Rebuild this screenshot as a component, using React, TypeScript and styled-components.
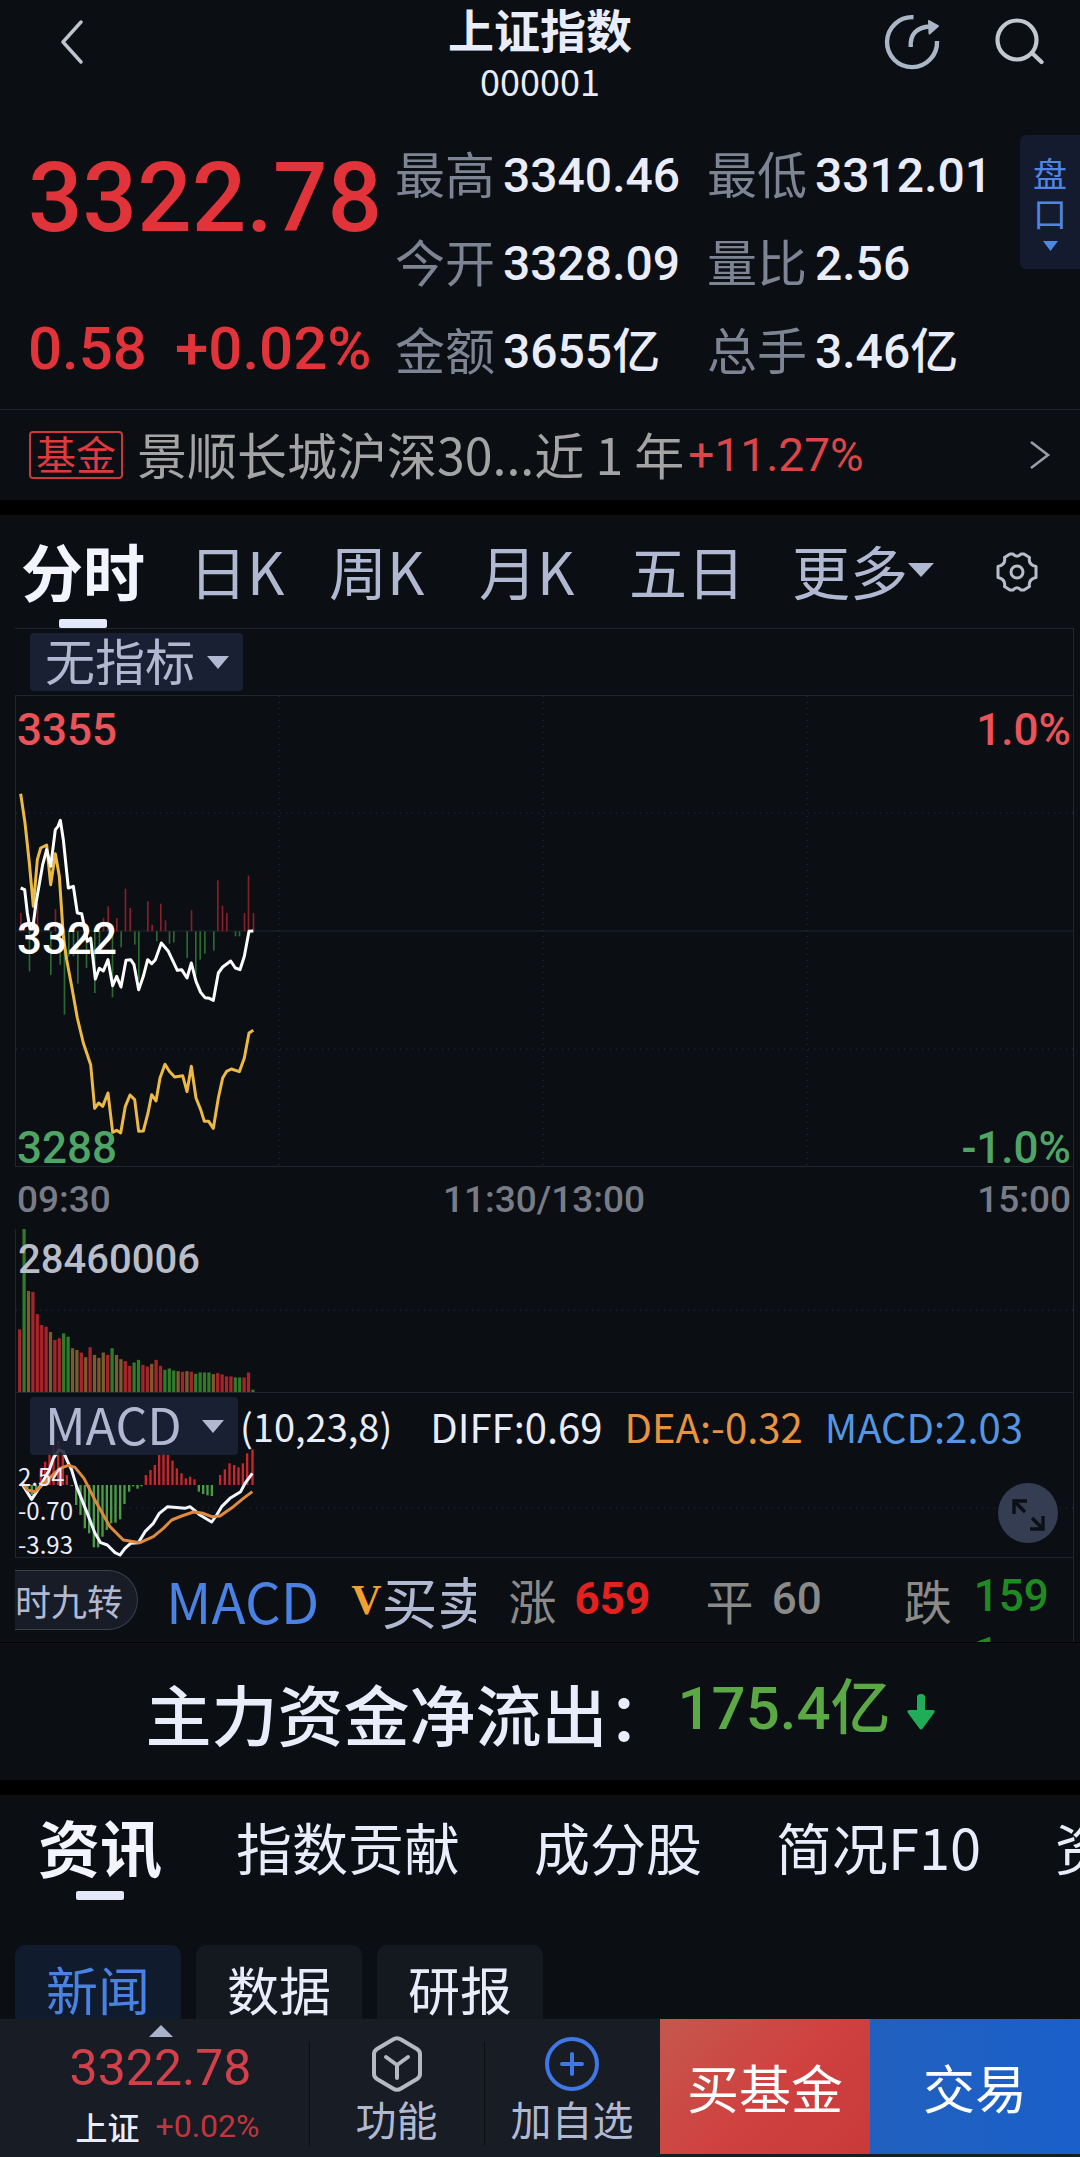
import React from 'react';
import styled, { createGlobalStyle, css } from 'styled-components';

const hans = '"Noto Sans CJK SC", sans-serif';
const digits = 'Roboto, "Noto Sans CJK SC", sans-serif';

const color = {
  bg: '#0b0e13',
  line: '#20252e',
  text: '#e9edfb',
  soft: '#b0b9d1',
  label: '#7d8595',
  axis: '#777c87',
  grey: '#8a8a89',
  red: '#e0333a',
  up: '#ea5358',
  down: '#4fa565',
  blue: '#4a82e4',
  orange: '#e8933f',
};

const Global = createGlobalStyle`
  * { box-sizing: border-box; }
  body { margin: 0; background: ${color.bg}; }
  button, select { font: inherit; color: inherit; background: none; border: 0; padding: 0; margin: 0; cursor: pointer; }
  a { color: inherit; text-decoration: none; }
  dl, dd, dt, h1, p { margin: 0; }
  svg { display: block; }
`;

const Screen = styled.div`
  display: flex;
  flex-direction: column;
  height: 100vh;
  overflow: hidden;
  background: ${color.bg};
  color: ${color.text};
  font-family: ${hans};
  white-space: nowrap;
`;

const Content = styled.main`
  flex: 1;
  min-height: 0;
  overflow: hidden auto;
  scrollbar-width: none;
`;

/* ---------- header ---------- */

const Header = styled.header`
  display: grid;
  grid-template-columns: 1fr auto 1fr;
  padding: 0 36px;
`;

const HeaderSide = styled.div<{ $end?: boolean }>`
  display: flex;
  height: 84px;
  align-items: center;
  gap: 54px;
  padding-left: 24px;
  justify-content: ${(p) => (p.$end ? 'flex-end' : 'flex-start')};
`;

const Title = styled.h1`
  font-size: 46px;
  line-height: 56px;
  font-weight: 700;
  text-align: center;
`;

const Code = styled.p`
  font-size: 36px;
  line-height: 48px;
  font-weight: 400;
  text-align: center;
`;

/* ---------- quote ---------- */

const Quote = styled.section`
  display: grid;
  grid-template-columns: 395fr 625fr 60px;
  padding: 24px 0 17px;
  border-bottom: 1px solid ${color.line};
`;

const PriceBlock = styled.div`
  display: flex;
  flex-direction: column;
  justify-content: space-between;
  padding: 22px 0 11px 28px;
  color: ${color.red};
  font-family: ${digits};
`;

const Price = styled.div`
  font-size: 96px;
  line-height: 96px;
  font-weight: 500;
`;

const Change = styled.div`
  display: flex;
  gap: 28px;
  font-size: 60px;
  line-height: 64px;
  font-weight: 500;
`;

const Stats = styled.dl`
  display: grid;
  grid-template-columns: 312fr 313fr;
`;

const Stat = styled.div`
  display: flex;
  align-items: center;
  gap: 8px;
  height: 88px;
  dt {
    font-size: 50px;
    line-height: 88px;
    font-weight: 400;
    color: ${color.label};
  }
  dd {
    padding-top: 8px;
    font-family: ${digits};
    font-size: 48px;
    line-height: 80px;
    font-weight: 500;
  }
`;

const DepthButton = styled.button`
  display: flex;
  flex-direction: column;
  align-items: center;
  justify-content: center;
  gap: 8px;
  height: 134px;
  margin-top: 7px;
  border-radius: 6px 0 0 6px;
  background: #141b2e;
  color: #4f86e6;
  font-size: 34px;
  line-height: 40px;
  font-weight: 400;
  span {
    width: 34px;
    white-space: normal;
  }
`;

const FundLink = styled.a`
  display: flex;
  align-items: center;
  height: 90px;
  padding: 0 29px;
  font-size: 50px;
  font-weight: 400;
  color: #a3a4a3;
`;

const FundTag = styled.span`
  width: 94px;
  height: 48px;
  margin-right: 14px;
  border: 2px solid #c9393b;
  border-radius: 4px;
  color: #df3a3e;
  font-size: 40px;
  line-height: 40px;
  text-align: center;
`;

const FundName = styled.span`
  padding-bottom: 4px;
  line-height: 80px;
`;

const FundGain = styled.span`
  flex: 1;
  margin-left: 4px;
  font-family: ${digits};
  font-size: 46px;
  font-weight: 400;
  color: #dd4549;
`;

const Band = styled.div`
  height: 15px;
  background: #000;
`;

/* ---------- tabs ---------- */

const PeriodTabs = styled.nav`
  display: grid;
  grid-template-columns: 168fr 140fr 150fr 150fr 163fr 204fr 84fr;
  align-items: center;
  height: 113px;
  padding-left: 21px;
`;

const SectionTabs = styled.nav`
  display: flex;
  align-items: center;
  gap: 74px;
  height: 105px;
  padding-left: 38px;
  overflow: hidden;
`;

const Tab = styled.button<{ $active?: boolean; $bright?: boolean }>`
  position: relative;
  display: flex;
  flex: none;
  align-items: center;
  justify-self: start;
  height: 100%;
  padding-bottom: 4px;
  font-size: ${(p) => (p.$bright ? 56 : 58)}px;
  font-weight: 400;
  color: ${(p) => (p.$bright ? color.text : color.soft)};
  ${(p) =>
    p.$active &&
    css`
      font-size: 62px;
      font-weight: 700;
      color: #f2f4ff;
      &::after {
        content: '';
        position: absolute;
        bottom: 0;
        left: calc(50% - 24px);
        width: 48px;
        height: 9px;
        border-radius: 2px;
        background: #e4e8fb;
      }
    `}
`;

/* ---------- chart ---------- */

const ChartCard = styled.section`
  margin: 0 6px 0 15px;
  border: 1px solid ${color.line};
  border-width: 1px 1px 0 0;
`;

const ChartTools = styled.div`
  height: 66px;
  padding: 4px 0 0 15px;
`;

const Picker = styled.label`
  position: relative;
  display: inline-flex;
  flex: none;
  align-items: center;
  min-width: 208px;
  height: 58px;
  border-radius: 4px;
  background: rgba(28, 35, 56, 0.88);
  color: ${color.soft};
  select {
    appearance: none;
    width: 100%;
    height: 58px;
    padding: 0 48px 6px 15px;
    font-size: 50px;
    line-height: 52px;
    font-weight: 400;
    outline: none;
  }
  svg {
    position: absolute;
    right: 14px;
    pointer-events: none;
  }
`;

const Plot = styled.div<{ $h: number; $top?: boolean }>`
  position: relative;
  height: ${(p) => p.$h}px;
  border-left: 1px solid ${color.line};
  border-bottom: 1px solid ${color.line};
  border-top: ${(p) => (p.$top ? `1px solid ${color.line}` : '0')};
`;

const Canvas = styled.svg`
  position: absolute;
  inset: 0;
  width: 100%;
  height: 100%;
`;

const Scale = styled.div<{ $end?: boolean }>`
  position: absolute;
  top: 6px;
  bottom: -10px;
  ${(p) => (p.$end ? 'right: 2px' : 'left: 1px')};
  display: flex;
  flex-direction: column;
  align-items: ${(p) => (p.$end ? 'flex-end' : 'flex-start')};
  justify-content: space-between;
  font-family: ${digits};
  font-size: 44px;
  line-height: 56px;
  font-weight: 500;
`;

const Tone = styled.span<{ $c: string }>`
  color: ${(p) => p.$c};
`;

const TimeAxis = styled.div`
  display: flex;
  justify-content: space-between;
  height: 62px;
  padding: 3px 2px 0 2px;
  font-family: ${digits};
  font-size: 37px;
  line-height: 60px;
  font-weight: 500;
  color: ${color.axis};
`;

const VolumeMax = styled.div`
  position: relative;
  padding: 6px 0 0 2px;
  font-family: ${digits};
  font-size: 40px;
  line-height: 50px;
  font-weight: 500;
  color: #b9bdc8;
`;

const MacdHead = styled.div`
  position: relative;
  display: flex;
  align-items: center;
  gap: 2px;
  padding: 4px 0 0 14px;
  font-size: 38px;
  line-height: 58px;
`;

const MacdValues = styled.div`
  display: flex;
  gap: 22px;
  margin-left: 36px;
  font-size: 40px;
`;

const MacdScale = styled.div`
  position: absolute;
  left: 2px;
  bottom: -4px;
  display: flex;
  flex-direction: column;
  font-size: 24px;
  line-height: 34px;
`;

const ExpandButton = styled.button`
  position: absolute;
  right: 15px;
  bottom: 14px;
  width: 60px;
  height: 60px;
  border-radius: 50%;
  background: #343d52;
`;

/* ---------- ticker under the chart ---------- */

const Ticker = styled.div`
  display: grid;
  grid-template-columns: minmax(0, 461fr) minmax(0, 596fr);
  height: 84px;
  overflow: hidden;
`;

const Indicators = styled.div`
  display: flex;
  align-items: center;
  overflow: hidden;
`;

const Pill = styled.button`
  flex: none;
  height: 60px;
  margin-right: 28px;
  padding-right: 14px;
  border: 1px solid #39404d;
  border-left: 0;
  border-radius: 0 30px 30px 0;
  background: #171c27;
  color: ${color.soft};
  font-size: 36px;
  line-height: 56px;
`;

const Indicator = styled.button<{ $c: string }>`
  display: flex;
  flex: none;
  align-items: center;
  margin-right: 32px;
  color: ${(p) => p.$c};
  font-size: 56px;
  line-height: 62px;
  font-weight: 400;
`;

const VipMark = styled.span`
  font-family: "Liberation Serif", serif;
  font-size: 42px;
  font-weight: 700;
  color: #f2a02f;
`;

const Counts = styled.dl`
  display: grid;
  grid-template-columns: 197fr 198fr 169fr;
  padding-left: 32px;
  overflow: hidden;
`;

const Count = styled.div<{ $c: string; $bold?: boolean; $gap: number; $lh?: number }>`
  display: flex;
  gap: ${(p) => p.$gap}px;
  padding-top: 9px;
  color: ${color.grey};
  dt {
    font-size: 48px;
    line-height: 64px;
    font-weight: 400;
  }
  dd {
    font-family: ${digits};
    font-size: 44px;
    line-height: ${(p) => p.$lh ?? 64}px;
    font-weight: ${(p) => (p.$bold ? 700 : 500)};
    color: ${(p) => p.$c};
  }
`;

const NetFlow = styled.section`
  display: flex;
  align-items: center;
  justify-content: center;
  height: 138px;
  border-top: 1px solid #000;
  font-size: 66px;
  font-weight: 500;
`;

const NetValue = styled.span`
  margin: 0 16px 0 4px;
  padding-bottom: 18px;
  font-family: ${digits};
  font-size: 60px;
  color: #5aa945;
`;

const Chips = styled.div`
  display: flex;
  gap: 15px;
  padding: 45px 15px 20px;
`;

const Chip = styled.button<{ $active?: boolean }>`
  width: 166px;
  height: 92px;
  padding-bottom: 4px;
  border-radius: 10px;
  background: ${(p) => (p.$active ? '#101b2e' : '#14181f')};
  color: ${(p) => (p.$active ? color.blue : color.text)};
  font-size: 52px;
  line-height: 88px;
`;

/* ---------- bottom bar ---------- */

const BottomBar = styled.footer`
  display: grid;
  grid-template-columns: 309fr 175fr 176fr 210fr 210fr;
  height: 138px;
  padding-bottom: 3px;
  background: #181c25;
`;

const BarQuote = styled.button`
  display: flex;
  flex-direction: column;
  align-items: center;
  padding: 6px 0 0 12px;
`;

const BarPrice = styled.span`
  font-family: ${digits};
  font-size: 50px;
  line-height: 62px;
  color: #d2414a;
`;

const BarSub = styled.span`
  display: flex;
  gap: 16px;
  padding-left: 14px;
  font-size: 32px;
  line-height: 54px;
  font-weight: 500;
`;

const BarChange = styled.span`
  font-family: ${digits};
  font-weight: 400;
  color: #c2353c;
`;

const BarAction = styled.button`
  position: relative;
  display: flex;
  flex-direction: column;
  align-items: center;
  gap: 2px;
  padding-top: 17px;
  color: ${color.soft};
  font-size: 41px;
  line-height: 48px;
  font-weight: 400;
  &::before {
    content: '';
    position: absolute;
    left: 0;
    top: 23px;
    bottom: 8px;
    width: 1px;
    background: #0b0d12;
  }
`;

const TradeButton = styled.button<{ $bg: string }>`
  background: ${(p) => p.$bg};
  color: #fff;
  font-size: 52px;
  line-height: 60px;
`;

/* ---------- drawings ---------- */

const Caret = ({ w = 22, h = 13, up = false, fill = 'currentColor' }: { w?: number; h?: number; up?: boolean; fill?: string }) => (
  <svg width={w} height={h} viewBox="0 0 20 12" preserveAspectRatio="none" aria-hidden>
    <path d={up ? 'M0 12h20L10 0z' : 'M0 0h20L10 12z'} fill={fill} />
  </svg>
);

const BackIcon = () => (
  <svg width="24" height="44" viewBox="0 0 24 44" fill="none" stroke="#bfc4ce" strokeWidth="3.4" strokeLinecap="round" strokeLinejoin="round">
    <path d="M21 2 3 22l18 20" />
  </svg>
);

const ShareIcon = () => (
  <svg width="56" height="56" viewBox="0 0 56 56" fill="none" stroke="#aab7c7" strokeWidth="4.4">
    <path d="M29.500 3.200A25 25 0 1 0 53 27" />
    <path d="M26.700 33C26 20 33 13 46 12.500" />
    <path d="M45 7l9 5-8.500 7.500z" fill="#aab7c7" strokeWidth="2" strokeLinejoin="round" />
  </svg>
);

const SearchIcon = () => (
  <svg width="50" height="48" viewBox="0 0 50 48" fill="none" stroke="#c3c7d0" strokeWidth="4.2" strokeLinecap="round">
    <circle cx="23" cy="22" r="19.5" />
    <path d="M38 35l9.500 9" />
  </svg>
);

const GearIcon = () => (
  <svg width="42" height="42" viewBox="0 0 42 42" fill="none" stroke="#b9bdc9" strokeWidth="3" strokeLinejoin="round">
    <path d="M14 3l3 0Q21 7.500 25 3h3l5.500 3.500Q32 13.500 40 15.500V26.500Q32 28.500 33.500 35.500L28 39h-3Q21 34.500 17 39h-3l-5.500-3.500Q10 28.500 2 26.500V15.500Q10 13.500 8.500 6.500Z" />
    <circle cx="21" cy="21" r="6" />
  </svg>
);

const dots = { stroke: '#2a303d', strokeDasharray: '1 5', strokeWidth: 1, vectorEffect: 'non-scaling-stroke' as const };
const rule = { stroke: color.line, strokeWidth: 1, vectorEffect: 'non-scaling-stroke' as const };
const curve = { fill: 'none', strokeWidth: 3, strokeLinejoin: 'round' as const, vectorEffect: 'non-scaling-stroke' as const };

const indexLine =
  '62,355 74,360 82,430 90,478 98,478 108,400 128,285 140,240 152,290 166,180 174,170 181,152 190,210 205,355 220,350 232,430 245,432 262,515 272,505 286,628 298,596 310,604 324,570 338,648 350,620 363,652 378,572 392,570 402,585 416,660 430,620 443,570 455,582 466,570 484,520 505,545 532,602 545,600 561,625 574,580 588,635 602,668 615,684 628,686 640,692 655,610 668,592 692,574 706,595 720,600 733,560 747,485 760,484';
const averageLine =
  '62,72 75,160 88,280 100,410 112,270 122,235 140,226 152,345 166,252 178,320 190,500 200,570 215,650 232,745 250,820 272,885 284,1016 296,1000 308,1010 324,970 338,1088 350,1082 362,1090 376,1010 390,976 404,990 416,1085 430,1084 444,1030 455,975 468,994 480,925 495,884 508,905 524,922 548,918 561,966 574,890 588,985 602,1020 613,1055 626,1055 640,1076 655,985 668,925 680,905 694,898 718,906 733,865 747,790 760,782';

const momentum: [number, number][] = [
  [62, 430], [88, 605], [112, 400], [152, 616], [166, 418], [180, 585], [193, 735], [206, 560], [220, 560], [233, 642],
  [259, 595], [284, 670], [298, 540], [310, 445], [324, 410], [337, 683], [350, 445], [363, 533], [376, 357], [390, 415],
  [404, 525], [416, 630], [443, 395], [456, 465], [470, 515], [482, 402], [496, 452], [508, 522], [521, 518], [561, 565],
  [574, 422], [587, 615], [600, 570], [614, 552], [641, 543], [653, 332], [667, 408], [680, 430], [706, 500], [718, 500],
  [733, 430], [745, 318], [760, 430],
];

const PriceChart = () => (
  <Canvas viewBox="0 0 3171 1410" preserveAspectRatio="none" role="img" aria-label="分时走势">
    <line x1="0" x2="3171" y1="705" y2="705" {...rule} />
    {[351, 1059].map((y) => (
      <line key={y} x1="0" x2="3171" y1={y} y2={y} {...dots} />
    ))}
    {[789, 1581, 2373].map((x) => (
      <line key={x} x1={x} x2={x} y1="0" y2="1410" {...dots} />
    ))}
    <g transform="translate(-48 221)">
      {momentum.map(([x, y]) => (
        <rect key={x} x={x - 2} width="5" y={Math.min(y, 485)} height={Math.abs(y - 485)} fill={y < 485 ? '#85202a' : '#2c6832'} />
      ))}
      <polyline points={averageLine} stroke="#ecb944" {...curve} />
      <polyline points={indexLine} stroke="#fff" {...curve} />
    </g>
  </Canvas>
);

const volumes: [string, number][] = [
  ['r', 189], ['g', 492], ['o', 305], ['r', 302], ['r', 235], ['r', 202], ['r', 197], ['o', 181], ['r', 157],
  ['r', 162], ['g', 177], ['g', 167], ['o', 132], ['o', 127], ['r', 119], ['o', 105], ['r', 135], ['o', 112],
  ['o', 103], ['o', 119], ['r', 112], ['g', 132], ['o', 112], ['o', 99], ['r', 93], ['r', 79], ['g', 89],
  ['g', 97], ['r', 82], ['r', 77], ['o', 85], ['r', 97], ['r', 79], ['g', 67], ['g', 71], ['g', 65],
  ['o', 63], ['r', 61], ['o', 63], ['r', 61], ['g', 55], ['g', 59], ['g', 59], ['g', 59], ['o', 54],
  ['r', 57], ['r', 53], ['r', 47], ['r', 47], ['g', 44], ['g', 44], ['r', 44], ['r', 59], ['g', 7],
];
const volumeFill: Record<string, string> = { r: '#a8242b', g: '#2f7a2b', o: '#7a5a2e' };

const VolumeChart = () => (
  <Canvas viewBox="0 0 3070 492" preserveAspectRatio="none" role="img" aria-label="成交量">
    <line x1="0" x2="3070" y1="245" y2="245" {...dots} />
    {volumes.map(([k, h], i) => (
      <rect key={i} x={6 + i * 12.78} width="9.5" y={492 - h} height={h} fill={volumeFill[k]} />
    ))}
  </Canvas>
);

const histogram: [number, number][] = [
  [82, 300], [95, 315], [108, 300], [122, 235], [135, 215], [148, 190], [160, 165], [174, 152], [188, 190], [200, 255],
  [215, 288], [228, 345], [241, 375], [254, 415], [267, 430], [281, 472], [294, 472], [307, 440], [320, 420], [333, 400],
  [346, 398], [360, 388], [373, 342], [387, 305], [399, 289], [412, 296], [424, 289], [437, 255], [451, 240], [464, 225], [477, 195],
  [490, 188], [503, 195], [517, 212], [530, 235], [544, 250], [557, 265], [570, 260], [583, 268], [596, 305], [609, 312],
  [622, 316], [635, 318], [660, 255], [674, 238], [688, 220], [702, 225], [715, 232], [728, 220], [741, 190], [757, 178],
];
const diffLine =
  '68,285 95,328 120,290 148,240 160,205 176,180 190,185 203,215 215,240 230,290 262,370 285,430 302,458 322,465 345,488 360,495 375,475 392,460 415,458 435,425 460,400 478,370 503,350 555,355 570,350 600,375 635,396 650,375 665,350 690,325 722,305 735,280 757,250';
const deaLine =
  '68,280 82,300 105,305 148,265 180,235 205,226 225,232 252,265 290,340 330,410 370,450 420,458 460,440 490,415 515,390 545,378 580,366 610,370 635,380 660,378 700,350 730,325 757,305';

const MacdChart = () => (
  <Canvas viewBox="0 0 3171 492" preserveAspectRatio="none" role="img" aria-label="MACD">
    <line x1="0" x2="3171" y1="345" y2="345" {...dots} />
    <g transform="translate(-48 -9)">
      {histogram.map(([x, y]) => (
        <rect key={x} x={x - 3} width="7" y={Math.min(y, 285)} height={Math.abs(y - 285)} fill={y < 285 ? '#c8262a' : '#4b9a48'} />
      ))}
      <polyline points={diffLine} stroke="#f4f6ff" {...curve} />
      <polyline points={deaLine} stroke="#dd8a3e" {...curve} />
    </g>
  </Canvas>
);

const stats = [
  ['最高', '3340.46'], ['最低', '3312.01'],
  ['今开', '3328.09'], ['量比', '2.56'],
  ['金额', '3655亿'], ['总手', '3.46亿'],
];

export default function App() {
  return (
    <Screen lang="zh-CN">
      <Global />
      <Content>
        <Header>
          <HeaderSide>
            <button aria-label="返回"><BackIcon /></button>
          </HeaderSide>
          <div>
            <Title>上证指数</Title>
            <Code>000001</Code>
          </div>
          <HeaderSide $end>
            <button aria-label="分享"><ShareIcon /></button>
            <button aria-label="搜索"><SearchIcon /></button>
          </HeaderSide>
        </Header>

        <Quote>
          <PriceBlock>
            <Price>3322.78</Price>
            <Change><span>0.58</span><span>+0.02%</span></Change>
          </PriceBlock>
          <Stats>
            {stats.map(([k, v]) => (
              <Stat key={k}><dt>{k}</dt><dd>{v}</dd></Stat>
            ))}
          </Stats>
          <DepthButton>
            <span>盘口</span>
            <Caret w={15} h={10} />
          </DepthButton>
        </Quote>

        <FundLink href="#fund">
          <FundTag>基金</FundTag>
          <FundName>景顺长城沪深30...近 1 年</FundName>
          <FundGain>+11.27%</FundGain>
          <svg width="22" height="30" viewBox="0 0 22 30" fill="none" stroke="#9a9da3" strokeWidth="2.6">
            <path d="M2 2l17 13L2 28" />
          </svg>
        </FundLink>
        <Band />

        <PeriodTabs>
          <Tab $active>分时</Tab>
          <Tab>日K</Tab>
          <Tab>周K</Tab>
          <Tab>月K</Tab>
          <Tab>五日</Tab>
          <Tab>更多<Caret w={26} h={14} /></Tab>
          <button aria-label="设置"><GearIcon /></button>
        </PeriodTabs>

        <ChartCard>
          <ChartTools>
            <Picker>
              <select aria-label="主图指标"><option>无指标</option></select>
              <Caret />
            </Picker>
          </ChartTools>
          <Plot $h={472} $top>
            <PriceChart />
            <Scale>
              <Tone $c={color.up}>3355</Tone>
              <Tone $c="#fff">3322</Tone>
              <Tone $c={color.down}>3288</Tone>
            </Scale>
            <Scale $end>
              <Tone $c={color.up}>1.0%</Tone>
              <Tone $c={color.down}>-1.0%</Tone>
            </Scale>
          </Plot>
          <TimeAxis>
            <span>09:30</span>
            <span>11:30/13:00</span>
            <span>15:00</span>
          </TimeAxis>
          <Plot $h={164}>
            <VolumeChart />
            <VolumeMax>28460006</VolumeMax>
          </Plot>
          <Plot $h={165}>
            <MacdChart />
            <MacdHead>
              <Picker>
                <select aria-label="副图指标"><option>MACD</option></select>
                <Caret />
              </Picker>
              <span>(10,23,8)</span>
              <MacdValues>
                <span>DIFF:0.69</span>
                <Tone $c={color.orange}>DEA:-0.32</Tone>
                <Tone $c="#5496e2">MACD:2.03</Tone>
              </MacdValues>
            </MacdHead>
            <MacdScale>
              <span>2.54</span>
              <span>-0.70</span>
              <span>-3.93</span>
            </MacdScale>
            <ExpandButton aria-label="全屏">
              <svg width="60" height="60" viewBox="0 0 60 60" fill="none" stroke="#0c0f15" strokeWidth="3.4">
                <path d="M16 31V18H29M16 18L27 29M45 33V46H32M45 46L34 35" />
              </svg>
            </ExpandButton>
          </Plot>
          <Ticker>
            <Indicators>
              <Pill>时九转</Pill>
              <Indicator $c={color.blue}>MACD</Indicator>
              <Indicator $c={color.soft}><VipMark>V</VipMark>买卖</Indicator>
            </Indicators>
            <Counts>
              <Count $c="#e3211f" $bold $gap={18}><dt>涨</dt><dd>659</dd></Count>
              <Count $c={color.grey} $gap={18}><dt>平</dt><dd>60</dd></Count>
              <Count $c="#1f8a22" $gap={22} $lh={58}><dt>跌</dt><dd>159<br />1</dd></Count>
            </Counts>
          </Ticker>
        </ChartCard>

        <NetFlow>
          <span>主力资金净流出：</span>
          <NetValue>175.4亿</NetValue>
          <svg width="28" height="36" viewBox="0 0 28 36" fill="#1fae57">
            <path d="M10 3q0-3 4-3t4 3v13h7q4 0 2 3L16 34q-2 3-4 0L1 19q-2-3 2-3h7z" />
          </svg>
        </NetFlow>
        <Band />

        <SectionTabs>
          <Tab $active>资讯</Tab>
          <Tab $bright>指数贡献</Tab>
          <Tab $bright>成分股</Tab>
          <Tab $bright>简况F10</Tab>
          <Tab $bright>资金</Tab>
        </SectionTabs>
        <Chips>
          <Chip $active>新闻</Chip>
          <Chip>数据</Chip>
          <Chip>研报</Chip>
        </Chips>
      </Content>

      <BottomBar>
        <BarQuote>
          <Caret up w={24} h={12} fill="#a9b3cc" />
          <BarPrice>3322.78</BarPrice>
          <BarSub>上证<BarChange>+0.02%</BarChange></BarSub>
        </BarQuote>
        <BarAction>
          <svg width="52" height="56" viewBox="0 0 52 56" fill="none" stroke="#b4b9c4" strokeWidth="4" strokeLinecap="round" strokeLinejoin="round">
            <path d="M22 3.500q4-2.500 8 0l16 9.500q3 2 3 5v20q0 3-3 5l-16 9.500q-4 2.500-8 0L6 43q-3-2-3-5V18q0-3 3-5z" />
            <path d="M15 21l11 8 11-8M26 29v13" />
          </svg>
          功能
        </BarAction>
        <BarAction>
          <svg width="56" height="56" viewBox="0 0 56 56" fill="none" stroke="#3f77e6" strokeWidth="4" strokeLinecap="round">
            <circle cx="28" cy="28" r="25" />
            <path d="M28 18v20M18 28h20" />
          </svg>
          加自选
        </BarAction>
        <TradeButton $bg="linear-gradient(135deg, #c4584c, #cf4240 50%, #c9393a)">买基金</TradeButton>
        <TradeButton $bg="linear-gradient(90deg, #2160bd, #1a5fca)">交易</TradeButton>
      </BottomBar>
    </Screen>
  );
}
